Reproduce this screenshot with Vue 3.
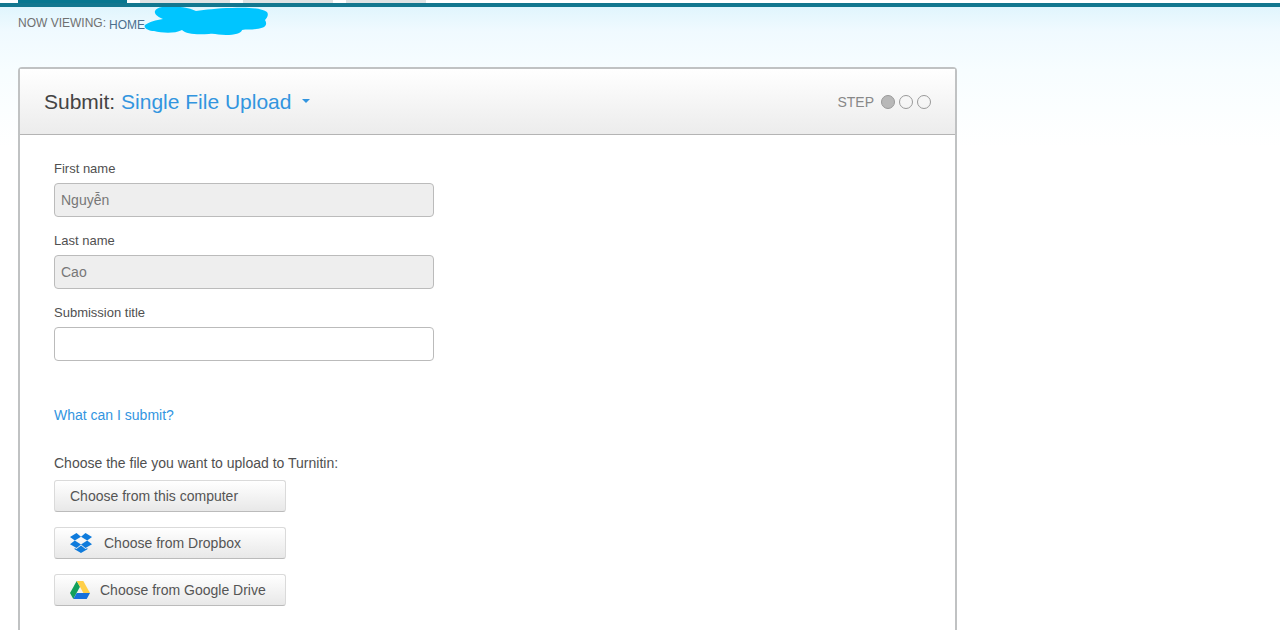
<script setup>
import { ref } from 'vue'

const firstName = ref('Nguyễn')
const lastName = ref('Cao')
const title = ref('')
const steps = [true, false, false]
</script>

<template>
  <div class="page">
    <nav class="tabs" aria-label="Sections">
      <span class="tab active"></span>
      <span class="tab"></span>
      <span class="tab"></span>
      <span class="tab short"></span>
    </nav>
    <div class="content">
      <div class="crumbs">
        <span>NOW VIEWING:</span>
        <a class="home" href="#">HOME</a>
        <svg class="scribble" width="126" height="30" viewBox="0 0 126 30" aria-hidden="true">
          <path fill="#00c5ff" d="M1 18C5 15 12 13 19 12C14 10 10 7 11 4C13 -1 25 -1 33 0C42 0 47 2 52 4C62 3 72 1 88 1C102 0 118 1 123 5C125 8 123 11 121 13C124 18 121 21 112 22C107 23 102 22 98 23C98 26 90 28 82 28C75 28 70 26 65 27C52 28 42 27 38 23C30 27 18 26 10 24C5 24-1 21 1 18Z" />
        </svg>
      </div>

      <main class="panel">
        <header class="head">
          <h1>
            Submit:
            <button class="mode" type="button">Single File Upload<span class="caret"></span></button>
          </h1>
          <div class="steps">
            <span>STEP</span>
            <span v-for="(on, i) in steps" :key="i" class="dot" :class="{ on }"></span>
          </div>
        </header>

        <form class="form" @submit.prevent>
          <div class="field">
            <label for="first">First name</label>
            <input id="first" v-model="firstName" type="text" disabled />
          </div>
          <div class="field">
            <label for="last">Last name</label>
            <input id="last" v-model="lastName" type="text" disabled />
          </div>
          <div class="field">
            <label for="title">Submission title</label>
            <input id="title" v-model="title" type="text" />
          </div>

          <a class="help" href="#">What can I submit?</a>
          <p class="prompt">Choose the file you want to upload to Turnitin:</p>

          <div class="sources">
            <button class="source" type="button">Choose from this computer</button>
            <button class="source dropbox" type="button">
              <svg width="22" height="20" viewBox="0 0 22 20" aria-hidden="true">
                <g fill="#0f7bdc">
                  <path d="M6.5 0L11 3.8L4.8 7.6L0 4Z" />
                  <path d="M15.5 0L22 4L17.2 7.6L11 3.8Z" />
                  <path d="M4.8 7.6L11 11.4L6.5 15L0 11.3Z" />
                  <path d="M17.2 7.6L22 11.3L15.5 15L11 11.4Z" />
                  <path d="M11 12.4L15.5 16.1L17.4 14.9V16.2L11 20L4.6 16.2V14.9L6.5 16.1Z" />
                </g>
              </svg>
              Choose from Dropbox
            </button>
            <button class="source" type="button">
              <svg width="20" height="18" viewBox="0 0 20 18" aria-hidden="true">
                <path fill="#12a05c" d="M6.7 0L10 5.8L3.3 18L0 12Z" />
                <path fill="#ffcf48" d="M6.7 0H13.3L20 12H13.4Z" />
                <path fill="#1670dc" d="M6.7 12H20L16.7 18H3.3Z" />
              </svg>
              Choose from Google Drive
            </button>
          </div>
        </form>
      </main>
    </div>
  </div>
</template>

<style>
body {
  margin: 0;
  background: #fff;
}
</style>

<style scoped>
.page {
  display: flex;
  flex-direction: column;
  min-height: 100vh;
  font-family: "Liberation Sans", Arial, sans-serif;
  color: #505050;
}
.tabs {
  display: flex;
  gap: 13px;
  height: 3px;
  padding-left: 18px;
  border-bottom: 4px solid #12778f;
}
.tab {
  width: 90px;
  background: #dfe3e4;
}
.tab.active {
  width: 109px;
  background: #087790;
}
.tab.short {
  width: 80px;
}
.content {
  display: flex;
  flex: 1;
  flex-direction: column;
  padding: 0 18px;
  background: linear-gradient(#e0f5fd, #f0faff 24px, #f7fdff 64px, #fff 140px) no-repeat;
}
.crumbs {
  display: flex;
  height: 33px;
  margin-bottom: 27px;
  font-size: 12px;
  line-height: 33px;
  color: #707070;
}
.home {
  margin-left: 3px;
  line-height: 36px;
  color: #4b6f8e;
  text-decoration: none;
}
.scribble {
  margin-left: -1px;
}
.panel {
  display: flex;
  flex: 1;
  flex-direction: column;
  box-sizing: border-box;
  width: 100%;
  max-width: 939px;
  border: 2px solid #c0c2c3;
  border-bottom: 0;
  border-radius: 4px 4px 0 0;
  background: #fff;
}
.head {
  display: flex;
  align-items: center;
  justify-content: space-between;
  height: 65px;
  padding: 0 24px;
  border-bottom: 1px solid #b4b4b4;
  background: linear-gradient(#fff, #ececec);
}
h1 {
  margin: 0;
  font-size: 21px;
  font-weight: 400;
  line-height: 24px;
  color: #444;
}
.mode {
  padding: 0;
  border: 0;
  background: none;
  font: inherit;
  color: #3295df;
}
.caret {
  display: inline-block;
  margin-left: 11px;
  border: 4px solid transparent;
  border-top-color: #3295df;
  border-bottom: 0;
  vertical-align: 6px;
}
.steps {
  display: flex;
  align-items: center;
  gap: 4px;
  font-size: 14px;
  color: #888;
}
.steps > span:first-child {
  margin-right: 3px;
}
.dot {
  box-sizing: border-box;
  width: 14px;
  height: 14px;
  border: 1px solid #999;
  border-radius: 50%;
}
.dot.on {
  background: #b8b8b8;
}
.form {
  padding: 24px 34px 0;
}
.field {
  display: flex;
  flex-direction: column;
  gap: 4px;
  max-width: 380px;
  margin-bottom: 14px;
}
label {
  font-size: 13px;
  line-height: 20px;
}
input {
  box-sizing: border-box;
  width: 100%;
  height: 34px;
  padding: 0 6px;
  border: 1px solid #bbb;
  border-radius: 4px;
  background: #fff;
  font: 14px "Liberation Sans", Arial, sans-serif;
  color: #555;
}
input:disabled {
  background: #eee;
  color: #777;
}
.help {
  display: block;
  width: fit-content;
  margin-top: 44px;
  font-size: 14px;
  line-height: 20px;
  color: #3295df;
  text-decoration: none;
}
.prompt {
  margin: 28px 0 7px;
  font-size: 14px;
  line-height: 20px;
}
.sources {
  display: flex;
  flex-direction: column;
  gap: 15px;
  width: 232px;
}
.source {
  display: flex;
  align-items: center;
  gap: 10px;
  height: 32px;
  padding: 0 15px;
  border: 1px solid #dadada;
  border-bottom-color: #bbb;
  border-radius: 3px;
  background: linear-gradient(#fff, #e8e8e8);
  font: 14px "Liberation Sans", Arial, sans-serif;
  color: #555;
}
.source.dropbox {
  gap: 12px;
}
</style>
